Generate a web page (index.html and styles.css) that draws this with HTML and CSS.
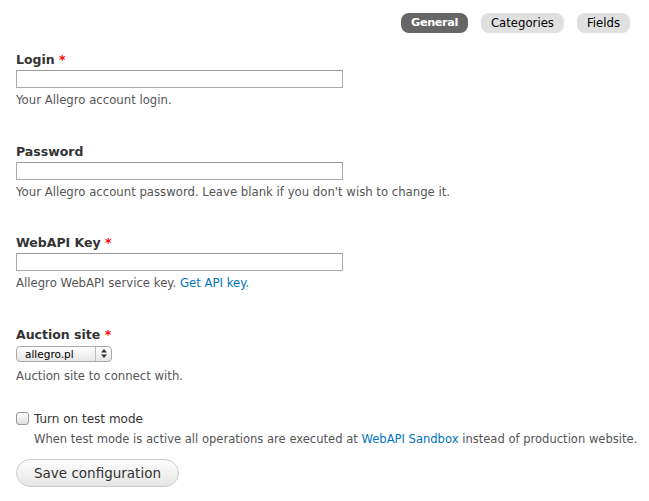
FILE: index.html
```html
<!DOCTYPE html>
<html lang="en">
<head>
  <meta charset="UTF-8">
  <title>Allegro settings</title>
  <link rel="stylesheet" href="styles.css">
</head>
<body>
  <div class="page">
    <ul class="tabs">
      <li><a class="active" href="#">General</a></li>
      <li><a href="#">Categories</a></li>
      <li><a href="#">Fields</a></li>
    </ul>

    <form class="config">
      <div class="form-item">
        <label for="login">Login <span class="required">*</span></label>
        <input type="text" id="login" class="form-text">
        <div class="description">Your Allegro account login.</div>
      </div>

      <div class="form-item">
        <label for="password">Password</label>
        <input type="password" id="password" class="form-text">
        <div class="description">Your Allegro account password. Leave blank if you don't wish to change it.</div>
      </div>

      <div class="form-item">
        <label for="key">WebAPI Key <span class="required">*</span></label>
        <input type="text" id="key" class="form-text">
        <div class="description">Allegro WebAPI service key. <a href="#">Get API key</a>.</div>
      </div>

      <div class="form-item select-item">
        <label for="site">Auction site <span class="required">*</span></label>
        <div class="select">
          <span class="select-value">allegro.pl</span>
          <span class="select-arrows">
            <svg width="6" height="9" viewBox="0 0 6 9"><path d="M3 0 L6 3.5 H0 Z M3 9 L6 5.5 H0 Z" fill="#333"/></svg>
          </span>
        </div>
        <div class="description">Auction site to connect with.</div>
      </div>

      <div class="form-item checkbox-item">
        <label class="option"><span class="checkbox"></span>Turn on test mode</label>
        <div class="description indent">When test mode is active all operations are executed at <a href="#">WebAPI Sandbox</a> instead of production website.</div>
      </div>

      <button type="button" class="button">Save configuration</button>
    </form>
  </div>
</body>
</html>
```

FILE: styles.css
```css
body {
  margin: 0;
  background: #fff;
  color: #333;
  font-family: "DejaVu Sans", Verdana, sans-serif;
  font-size: 11.7px;
}

a {
  color: #0074bd;
  text-decoration: none;
}

.page {
  padding: 13px 19px 0 16px;
}

.tabs {
  list-style: none;
  margin: 0;
  padding: 0;
  display: flex;
  justify-content: flex-end;
  gap: 13px;
}

.tabs a {
  display: block;
  height: 20px;
  line-height: 20px;
  padding: 0 10px;
  border-radius: 8px;
  background: #e0e0e0;
  color: #000;
  font-size: 11.7px;
}

.tabs a.active {
  background: #666;
  color: #fff;
  font-weight: bold;
  font-size: 11.3px;
  letter-spacing: -0.4px;
}

.config {
  margin-top: 19px;
}

.form-item {
  margin-bottom: 36.5px;
}

.form-item label {
  display: block;
  font-weight: bold;
  font-size: 12.5px;
  margin-bottom: 3px;
}

.required {
  color: #f00;
}

.form-text {
  display: block;
  box-sizing: border-box;
  width: 327px;
  height: 18px;
  margin: 0;
  border: 1px solid #aaa;
  border-top-color: #999;
  padding: 0 3px;
}

.description {
  color: #555;
  margin-top: 5px;
}

.select-item {
  margin-bottom: 29px;
}

.select-item label {
  margin-bottom: 4px;
}

.select-item .description {
  margin-top: 7px;
}

.select {
  display: flex;
  width: 96px;
  height: 16px;
  box-sizing: border-box;
  border: 1px solid #aaa;
  border-radius: 4px;
  background: linear-gradient(#fff, #e6e6e6);
  font-size: 10.5px;
  color: #000;
}

.select-value {
  flex: 1;
  padding-left: 8px;
  line-height: 14px;
}

.select-arrows {
  width: 15px;
  border-left: 1px solid #bbb;
  display: flex;
  align-items: center;
  justify-content: center;
}

.checkbox-item {
  margin-bottom: 13px;
}

.form-item label.option {
  display: flex;
  align-items: center;
  gap: 5px;
  font-weight: normal;
  font-size: 12px;
  margin-bottom: 0;
}

.checkbox {
  width: 11px;
  height: 11px;
  border: 1px solid #999;
  border-radius: 3px;
  background: linear-gradient(#fff, #ddd);
}

.description.indent {
  padding-left: 18px;
  margin-top: 6px;
  margin-right: -19px;
  font-size: 11.55px;
  white-space: nowrap;
}

.button {
  height: 28px;
  padding: 0 17px;
  border: 1px solid #ccc;
  border-radius: 14px;
  background: linear-gradient(#fdfdfd, #e6e6e6);
  color: #333;
  font-family: inherit;
  font-size: 13.5px;
}
```
